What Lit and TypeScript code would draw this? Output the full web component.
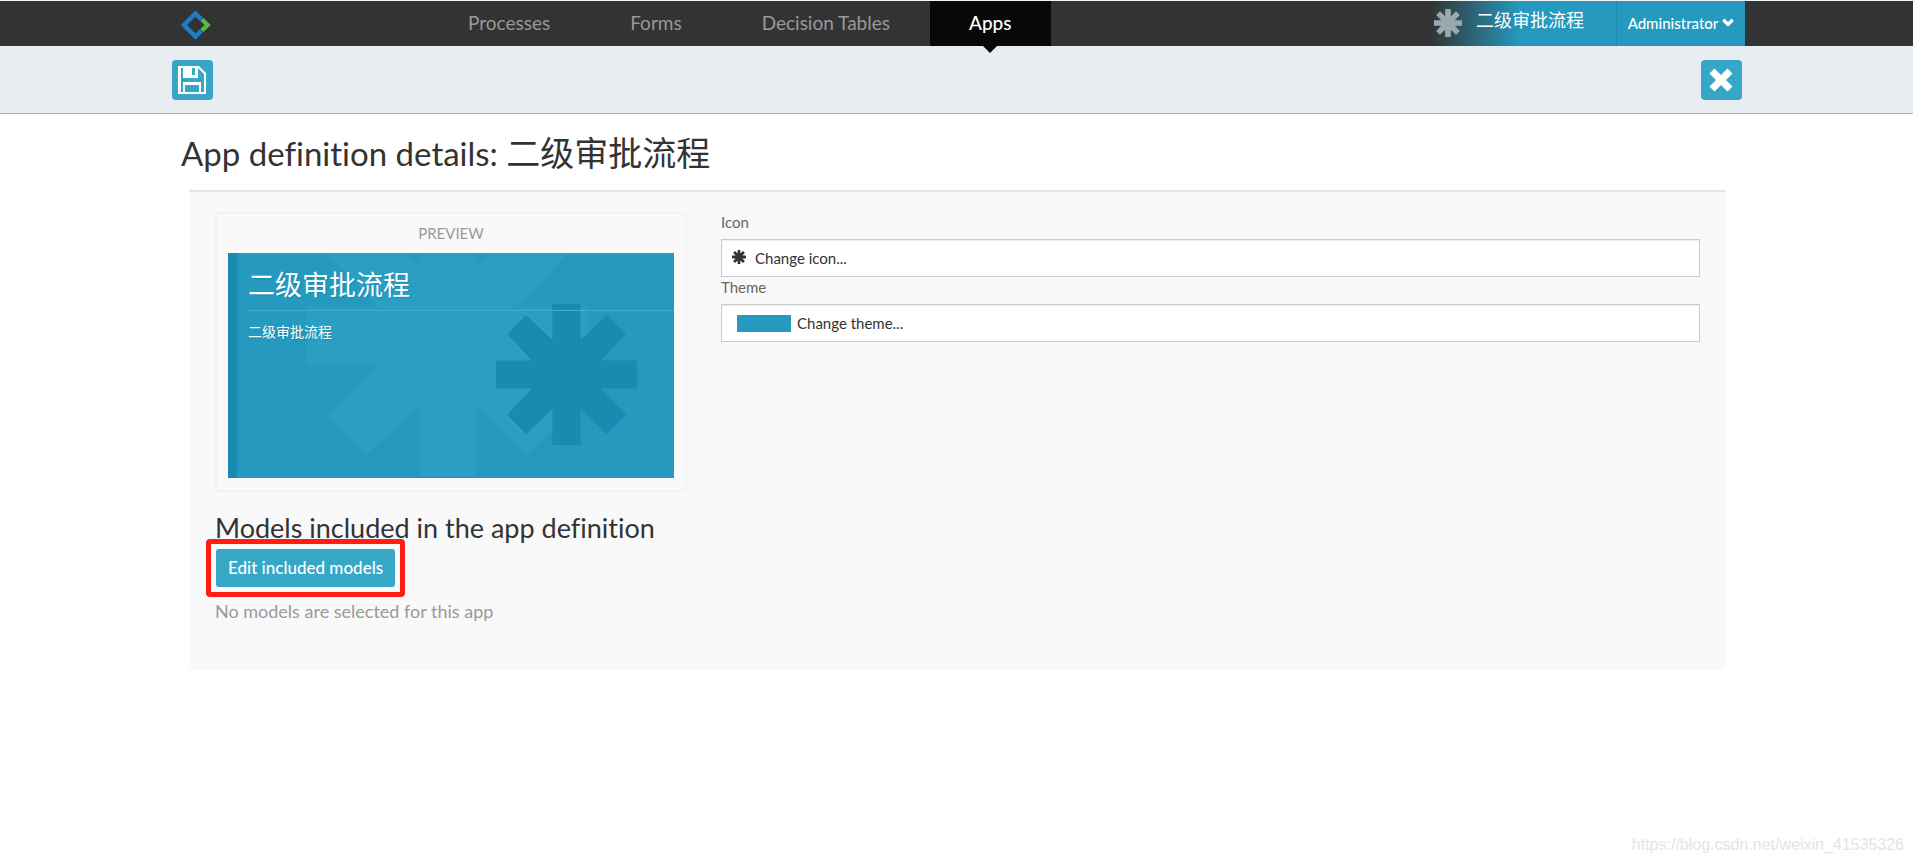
import { LitElement, html, css } from "lit";
import { customElement, state } from "lit/decorators.js";

const asterisk = (className: string) => html`
  <svg class=${className} viewBox="-70 -70 140 140" aria-hidden="true">
    <path
      d="M-14-70H14V-34L40-59 59-40 34-14H70V14H34L59 40 40 59 14 34V70H-14V34L-40 59-59 40-34 14H-70V-14H-34L-59-40-40-59-14-34Z"
    />
  </svg>
`;

@customElement("app-root")
export class AppRoot extends LitElement {
  static styles = css`
    :host {
      display: block;
      position: relative;
      min-height: 100vh;
      box-sizing: border-box;
      background: #fff;
      color: #333;
      font-family: Lato, "Noto Sans CJK SC", sans-serif;
      font-size: 15px;
      font-variant-ligatures: none;
      line-height: 20px;
    }
    * {
      box-sizing: border-box;
    }
    h1,
    h2,
    h3,
    p {
      margin: 0;
      font-weight: 400;
    }
    button {
      font: inherit;
      font-variant-ligatures: none;
      cursor: pointer;
    }
    .navbar {
      display: flex;
      height: 46px;
      padding: 0 168px 0 181px;
      border-top: 1px solid #f4f4f4;
      background: #333;
    }
    .brand {
      display: flex;
      align-items: center;
      width: 247px;
      padding-top: 2px;
    }
    .logo {
      width: 30px;
      height: 30px;
    }
    .links {
      display: flex;
      flex: 1;
    }
    .link {
      position: relative;
      height: 45px;
      padding: 0 40px;
      color: #999;
      font-size: 19px;
      line-height: 43px;
      text-decoration: none;
      white-space: nowrap;
    }
    .link.active {
      padding: 0 39px;
      background: #080808;
      color: #fff;
      font-weight: 500;
    }
    .link.active::after {
      content: "";
      position: absolute;
      top: 100%;
      left: 50%;
      margin-left: -7px;
      border: 7px solid transparent;
      border-top-color: #080808;
      border-bottom: 0;
    }
    .app {
      display: flex;
      gap: 14px;
      width: 186px;
      padding-left: 4px;
      background: linear-gradient(to right, #333, #2599be 90px);
      color: #fff;
      font-size: 18px;
      line-height: 38px;
      white-space: nowrap;
    }
    .app-icon {
      width: 28px;
      height: 28px;
      margin-top: 8px;
      fill: #9aa9ae;
    }
    .account {
      display: flex;
      align-items: center;
      justify-content: center;
      gap: 4px;
      width: 129px;
      padding: 0 0 2px;
      border: 0;
      border-left: 1px solid #178bb0;
      background: #2599be;
      color: #fff;
      font-size: 15px;
      font-weight: 500;
    }
    .chevron {
      width: 12px;
      height: 9px;
      fill: #fff;
    }
    .toolbar {
      display: flex;
      justify-content: space-between;
      padding: 14px 171px 13px 172px;
      border-bottom: 1px solid #a4acb9;
      background: #e8edf1;
    }
    .tool {
      display: grid;
      place-items: center;
      width: 41px;
      height: 40px;
      padding: 0 1px 1px 0;
      border: 0;
      border-radius: 4px;
      background: #36a7c7;
    }
    .tool-icon {
      width: 28px;
      height: 28px;
      fill: #fff;
    }
    .title {
      padding: 19px 181px 17px;
      font-size: 33px;
      line-height: 40px;
    }
    .title-name {
      font-size: 34px;
    }
    .panel {
      display: grid;
      grid-template-columns: 472px minmax(0, 1fr);
      column-gap: 34px;
      margin: 0 188px 0 189px;
      padding: 20px 25px 49px 26px;
      border-top: 2px solid #e6e6e6;
      background: #f9f9f9;
    }
    .preview {
      padding: 9px 11px 12px;
      border: 2px dotted #eee;
    }
    .caption {
      padding-bottom: 10px;
      color: #999;
      text-align: center;
    }
    .tile {
      position: relative;
      height: 225px;
      padding-left: 11px;
      overflow: hidden;
      border-left: 9px solid #178bb0;
      background: #2599be;
      color: #fff;
      text-shadow: 1px 1px 1px #178bb0;
    }
    .tile-title {
      position: relative;
      padding: 12px 0 5px;
      border-bottom: 1px solid #48aacb;
      font-size: 27px;
      line-height: 40px;
    }
    .tile-text {
      position: relative;
      padding-top: 11px;
      font-size: 14px;
    }
    .mark {
      position: absolute;
      top: 51px;
      right: 37px;
      width: 141px;
      height: 141px;
      fill: #178bb0;
    }
    .mark-large {
      position: absolute;
      top: -58px;
      right: 86px;
      width: 281px;
      height: 281px;
      fill: #2a9fc3;
    }
    .label {
      display: block;
      padding-bottom: 7px;
      color: #666;
    }
    .picker {
      display: flex;
      align-items: center;
      width: 100%;
      height: 38px;
      padding: 0 10px;
      border: 1px solid #ccc;
      background: #fff;
      box-shadow: inset 0 1px 1px #eee;
      color: #333;
      text-align: left;
    }
    .picker-icon {
      width: 14px;
      height: 14px;
      margin: 0 9px 3px 0;
      fill: #333;
    }
    .swatch {
      width: 54px;
      height: 17px;
      margin: 0 6px 0 5px;
      background: #2599be;
    }
    .models {
      grid-column: 1 / -1;
      padding-top: 19px;
    }
    .models-title {
      font-size: 27px;
      line-height: 34px;
    }
    .edit {
      position: relative;
      display: block;
      height: 38px;
      margin: 4px 0 0 1px;
      padding: 0 12px;
      border: 0;
      border-radius: 3px;
      background: #36a7c7;
      color: #fff;
      font-size: 17px;
      font-weight: 500;
    }
    .edit::after {
      content: "";
      position: absolute;
      inset: -10px;
      border: 5px solid #ff1f12;
      border-radius: 4px;
    }
    .empty {
      padding-top: 14px;
      color: #999;
      font-size: 18px;
    }
    .watermark {
      position: absolute;
      right: 9px;
      bottom: 9px;
      color: #e4e4e4;
      font-family: "Liberation Sans", sans-serif;
      font-size: 16px;
    }
  `;

  @state() private active = "Apps";

  private links = ["Processes", "Forms", "Decision Tables", "Apps"];

  render() {
    return html`
      <header class="navbar">
        <div class="brand">
          <svg class="logo" viewBox="0 0 30 30" role="img" aria-label="Home">
            <path d="M20.500 9.500 14.500 3.500 3 15 14.500 26.500 20.500 20.500" fill="none" stroke="#1d7dc4" stroke-width="4.500" />
            <path d="M21 9.500 26.500 15 21 20.500" fill="none" stroke="#57b947" stroke-width="4.500" />
          </svg>
        </div>
        <nav class="links">
          ${this.links.map(
            (name) => html`<a
              class="link ${name === this.active ? "active" : ""}"
              href="#"
              @click=${(e: Event) => {
                e.preventDefault();
                this.active = name;
              }}
              >${name}</a
            >`
          )}
        </nav>
        <div class="app">${asterisk("app-icon")}<span>二级审批流程</span></div>
        <button class="account" type="button">
          Administrator
          <svg class="chevron" viewBox="0 0 12 9" aria-hidden="true">
            <path d="M2.500 0.500 6 4 9.500 0.500 12 3 6 8.800 0 3Z" />
          </svg>
        </button>
      </header>

      <div class="toolbar">
        <button class="tool" type="button" aria-label="Save">
          <svg class="tool-icon" viewBox="0 0 28 28" aria-hidden="true">
            <path fill-rule="evenodd" d="M0 0H21L28 7V28H0ZM3 2V26H5V16H23V26H26V8L20 2V12H5V2ZM14 2V9H17V2ZM7 19V26H21V19Z" />
          </svg>
        </button>
        <button class="tool" type="button" aria-label="Close">
          <svg class="tool-icon" viewBox="0 0 28 28" aria-hidden="true">
            <path d="M7.500 2.500 14 9 20.500 2.500 25.500 7.500 19 14 25.500 20.500 20.500 25.500 14 19 7.500 25.500 2.500 20.500 9 14 2.500 7.500Z" />
          </svg>
        </button>
      </div>

      <main>
        <h1 class="title">App definition details: <span class="title-name">二级审批流程</span></h1>
        <div class="panel">
          <section class="preview">
            <div class="caption">PREVIEW</div>
            <div class="tile">
              ${asterisk("mark-large")} ${asterisk("mark")}
              <h3 class="tile-title">二级审批流程</h3>
              <p class="tile-text">二级审批流程</p>
            </div>
          </section>
          <section>
            <label class="label" for="icon">Icon</label>
            <button class="picker" id="icon" type="button">${asterisk("picker-icon")}Change icon...</button>
            <label class="label" for="theme">Theme</label>
            <button class="picker" id="theme" type="button"><span class="swatch"></span>Change theme...</button>
          </section>
          <section class="models">
            <h2 class="models-title">Models included in the app definition</h2>
            <button class="edit" type="button">Edit included models</button>
            <p class="empty">No models are selected for this app</p>
          </section>
        </div>
      </main>
      <div class="watermark">https://blog.csdn.net/weixin_41535326</div>
    `;
  }
}
